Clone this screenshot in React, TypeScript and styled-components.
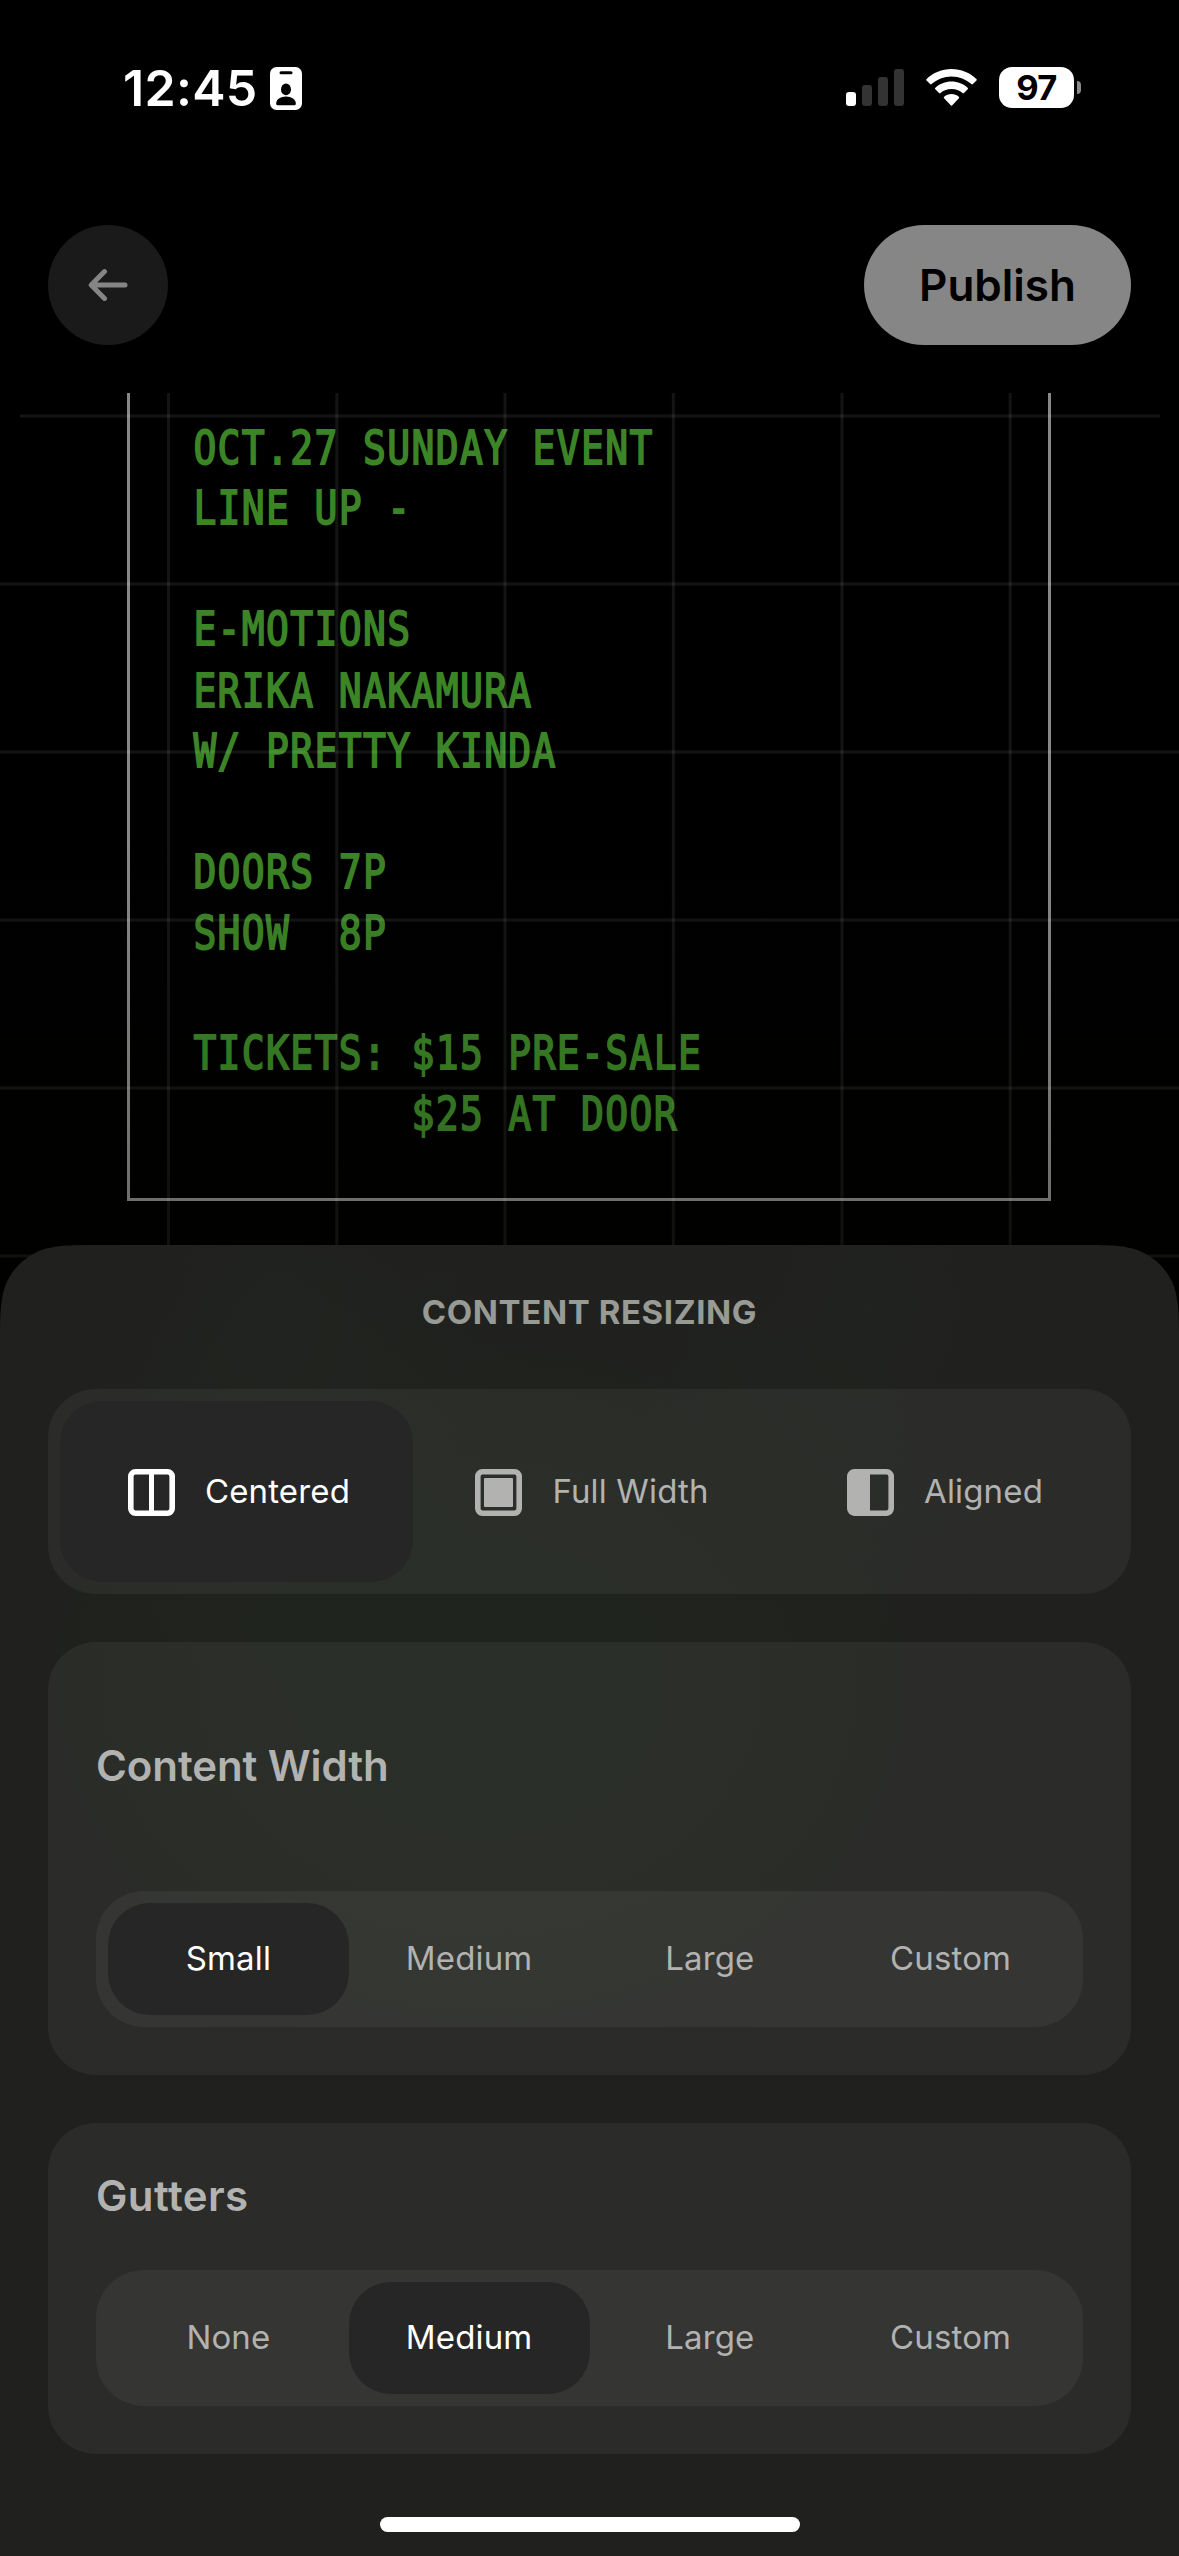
import React from "react";
import styled, { createGlobalStyle } from "styled-components";

const GlobalStyle = createGlobalStyle`
  * { box-sizing: border-box; }
  html, body { margin: 0; padding: 0; background: #000; }
  body { font-family: Inter, "Liberation Sans", sans-serif; }
  button { font: inherit; border: 0; padding: 0; background: none; }
`;

const Screen = styled.main`
  display: flex;
  flex-direction: column;
  width: 1179px;
  height: 2556px;
  overflow: hidden;
  background: #000;
`;

/* ---------- status bar ---------- */

const StatusBar = styled.div`
  display: flex;
  justify-content: space-between;
  align-items: center;
  height: 177px;
  padding: 0 98px 0 123px;
  color: #fff;
`;

const ClockGroup = styled.div`
  display: flex;
  align-items: center;
  gap: 13px;
`;

const Clock = styled.span`
  padding-bottom: 2px;
  font-size: 50px;
  font-weight: 600;
  line-height: 60px;
  letter-spacing: 0.3px;
`;

const StatusIcons = styled.div`
  display: flex;
  align-items: center;
  padding-bottom: 2px;
`;

const SignalBars = styled.div`
  display: flex;
  align-items: flex-end;
  gap: 6px;
  height: 37px;
  margin-right: 22px;
`;

const SignalBar = styled.span<{ $height: number; $active?: boolean }>`
  width: 10px;
  height: ${(p) => p.$height}px;
  border-radius: 3px;
  background: ${(p) => (p.$active ? "#fff" : "#333")};
`;

const Battery = styled.span`
  display: flex;
  align-items: center;
  justify-content: center;
  width: 75px;
  height: 41px;
  margin-left: 22px;
  border-radius: 13px;
  background: #fff;
  color: #000;
  font-size: 34.5px;
  font-weight: 700;
  line-height: 41px;
  letter-spacing: -0.6px;
`;

const BatteryTip = styled.span`
  width: 4px;
  height: 13px;
  margin-left: 3px;
  border-radius: 0 5px 5px 0;
  background: #8a8a8a;
`;

/* ---------- header ---------- */

const Header = styled.header`
  display: flex;
  justify-content: space-between;
  padding: 48px;
`;

const BackButton = styled.button`
  display: flex;
  align-items: center;
  justify-content: center;
  width: 120px;
  height: 120px;
  border-radius: 60px;
  background: #1a1a1a;
`;

const PublishButton = styled.button`
  width: 267px;
  height: 120px;
  border-radius: 60px;
  background: #868686;
  color: #000;
  font-size: 44px;
  font-weight: 600;
`;

/* ---------- page canvas ---------- */

const Canvas = styled.section`
  position: relative;
  flex: none;
  height: 967px;
  padding: 0 128px 0 127px;
`;

const GridLines = styled.svg`
  position: absolute;
  inset: 0;
`;

const CanvasShade = styled.div`
  position: absolute;
  inset: 0;
  background: linear-gradient(to bottom, rgba(4, 8, 0, 0) 440px, rgba(4, 8, 0, 0.22) 852px);
`;

const Poster = styled.article`
  height: 808px;
  padding: 25.6px 0 0 63.4px;
  border: 3px solid #888;
  border-top: 0;
`;

const PosterText = styled.pre`
  margin: 0;
  color: #3c8527;
  font-family: "DejaVu Sans Mono", monospace;
  font-size: 38px;
  line-height: 49.44px;
  letter-spacing: 1.35px;
  -webkit-text-stroke: 1.5px #3c8527;
  transform: scaleY(1.224);
  transform-origin: 0 0;
`;

/* ---------- sheet ---------- */

const Sheet = styled.section`
  position: relative;
  flex: none;
  display: flex;
  flex-direction: column;
  align-items: stretch;
  height: 1311px;
  margin-top: -115px;
  padding: 0 48px;
  background:
    radial-gradient(ellipse 580px 460px at 480px 440px, rgba(30, 46, 30, 0.28), rgba(30, 46, 30, 0.17) 50%, rgba(30, 46, 30, 0) 100%),
    radial-gradient(ellipse 240px 400px at 270px 60px, rgba(34, 42, 36, 0.22), rgba(34, 42, 36, 0) 100%),
    radial-gradient(ellipse 240px 320px at 870px 60px, rgba(34, 42, 36, 0.22), rgba(34, 42, 36, 0) 100%),
    #20201e;
  clip-path: path("M0 101C0 71.8 0 57.3 4.9 41.7C11.2 24.6 24.6 11.2 41.7 4.9C57.3 0 71.8 0 101 0L1078 0C1107.2 0 1121.7 0 1137.3 4.9C1154.4 11.2 1167.8 24.6 1174.1 41.7C1179 57.3 1179 71.8 1179 101L1179 1311L0 1311Z");
`;

const SheetTitle = styled.h1`
  margin: 0;
  height: 144px;
  padding-top: 47px;
  color: #989a94;
  font-size: 33px;
  font-weight: 700;
  line-height: 40px;
  letter-spacing: 0.6px;
  text-align: center;
`;

const Segmented = styled.div<{ $height: number }>`
  display: flex;
  flex: none;
  height: ${(p) => p.$height}px;
  padding: 12px;
  border-radius: 48px;
  background: rgba(255, 255, 255, 0.05);
`;

const Segment = styled.button<{ $selected?: boolean; $nudge?: number }>`
  display: flex;
  flex: 1 1 0;
  align-items: center;
  justify-content: center;
  gap: 27px;
  padding-left: ${(p) => p.$nudge ?? 0}px;
  border-radius: 42px;
  background: ${(p) => (p.$selected ? "#262626" : "transparent")};
  color: ${(p) => (p.$selected ? "#fff" : "#b2b2b1")};
`;

const SegmentLabel = styled.span`
  padding-bottom: 2px;
  font-size: 33px;
  font-weight: 400;
  line-height: 40px;
  letter-spacing: 0.15px;
`;

const Card = styled.div`
  display: flex;
  flex: none;
  flex-direction: column;
  margin-top: 48px;
  padding: 48px;
  border-radius: 48px;
  background: rgba(255, 255, 255, 0.05);
`;

const CardTitle = styled.h2<{ $height: number; $tracking: number }>`
  margin: 0 0 48px;
  height: ${(p) => p.$height}px;
  color: #b2b2b1;
  font-size: 42px;
  font-weight: 600;
  line-height: ${(p) => p.$height - 1}px;
  letter-spacing: ${(p) => p.$tracking}px;
`;

const HomeIndicator = styled.div`
  width: 420px;
  height: 15px;
  margin: 63px auto 0;
  border-radius: 8px;
  background: #fff;
`;

/* ---------- icons ---------- */

const BadgeIcon = () => (
  <svg width="32" height="43" viewBox="0 0 32 43">
    <rect width="32" height="43" rx="6.5" fill="#fff" />
    <rect x="9.5" y="4.2" width="13" height="3" rx="1.5" fill="#000" />
    <ellipse cx="16" cy="22.4" rx="5" ry="5.8" fill="#000" />
    <path d="M6.2 36.6C6.2 32.6 10.4 29.6 16 29.6S25.8 32.6 25.8 36.6C25.8 37.6 25.4 38.2 24.6 38.2H7.4C6.6 38.2 6.2 37.6 6.2 36.6Z" fill="#000" />
  </svg>
);

const WifiIcon = () => (
  <svg width="51" height="37" viewBox="0 0 51 37" fill="#fff">
    <path d="M25.5 0C35.1 0 43.9 3.8 50.4 10C50.9 10.5 50.9 11.1 50.5 11.5L46.9 15.1C46.5 15.5 45.9 15.5 45.4 15.1C40.1 10.3 33.1 7.4 25.5 7.4S10.9 10.3 5.6 15.1C5.1 15.5 4.5 15.5 4.1 15.1L.5 11.5C.1 11.1.1 10.5.6 10C7.1 3.8 15.9 0 25.5 0Z" />
    <path d="M25.5 12.6C31.7 12.6 37.3 14.9 41.6 18.8C42.1 19.2 42.1 19.9 41.7 20.3L38 24C37.6 24.4 37 24.4 36.5 24C33.6 21.4 29.7 19.9 25.5 19.9S17.4 21.4 14.5 24C14 24.4 13.4 24.4 13 24L9.3 20.3C8.9 19.9 8.9 19.2 9.4 18.8C13.7 14.9 19.3 12.6 25.5 12.6Z" />
    <path d="M25.5 25.1C28.3 25.1 30.9 26.1 32.8 27.7C33.3 28.1 33.3 28.8 32.9 29.2L26.3 36.3C25.9 36.8 25.1 36.8 24.7 36.3L18.1 29.2C17.7 28.8 17.7 28.1 18.2 27.7C20.1 26.1 22.7 25.1 25.5 25.1Z" />
  </svg>
);

const ArrowIcon = () => (
  <svg width="40" height="34" viewBox="0 0 40 34" fill="none" stroke="#858585" strokeWidth="5" strokeLinecap="round" strokeLinejoin="round">
    <path d="M16.5 3.6L3.2 17L16.5 30.4M3.8 17H37" />
  </svg>
);

const CenteredIcon = () => (
  <svg width="53" height="53" viewBox="0 -1 53 53" fill="none" stroke="currentColor" strokeWidth="5.6">
    <rect x="5.8" y="5.8" width="41.4" height="41.4" rx="4.6" />
    <path d="M26.5 5.8V47.2" strokeWidth="5" />
  </svg>
);

const FullWidthIcon = () => (
  <svg width="53" height="53" viewBox="0 -1 53 53" fill="none" stroke="currentColor" strokeWidth="5.6">
    <rect x="5.8" y="5.8" width="41.4" height="41.4" rx="4.6" />
    <rect x="12" y="12" width="29" height="29" rx="1" fill="currentColor" stroke="none" />
  </svg>
);

const AlignedIcon = () => (
  <svg width="53" height="53" viewBox="0 -1 53 53">
    <path
      fill="currentColor"
      fillRule="evenodd"
      d="M10.4 3H42.6A7.4 7.4 0 0 1 50 10.4V42.6A7.4 7.4 0 0 1 42.6 50H10.4A7.4 7.4 0 0 1 3 42.6V10.4A7.4 7.4 0 0 1 10.4 3ZM26 8.6V44.4H42.6A1.8 1.8 0 0 0 44.4 42.6V10.4A1.8 1.8 0 0 0 42.6 8.6Z"
    />
  </svg>
);

/* ---------- data ---------- */

const posterCopy = `OCT.27 SUNDAY EVENT
LINE UP -

E-MOTIONS
ERIKA NAKAMURA
W/ PRETTY KINDA

DOORS 7P
SHOW  8P

TICKETS: $15 PRE-SALE
         $25 AT DOOR`;

const columns = [168.5, 336.8, 505, 673.4, 842, 1010.2];
const rows = [191, 359, 527, 695, 863];

const layouts = [
  { label: "Centered", Icon: CenteredIcon },
  { label: "Full Width", Icon: FullWidthIcon },
  { label: "Aligned", Icon: AlignedIcon },
];

const OptionRow = ({ options, selected }: { options: string[]; selected: string }) => (
  <Segmented $height={136}>
    {options.map((o) => (
      <Segment key={o} $selected={o === selected}>
        <SegmentLabel>{o}</SegmentLabel>
      </Segment>
    ))}
  </Segmented>
);

export default function App() {
  return (
    <>
      <GlobalStyle />
      <Screen>
        <StatusBar>
          <ClockGroup>
            <Clock>12:45</Clock>
            <BadgeIcon />
          </ClockGroup>
          <StatusIcons>
            <SignalBars>
              <SignalBar $height={14} $active />
              <SignalBar $height={21} />
              <SignalBar $height={29} />
              <SignalBar $height={37} />
            </SignalBars>
            <WifiIcon />
            <Battery>97</Battery>
            <BatteryTip />
          </StatusIcons>
        </StatusBar>

        <Header>
          <BackButton aria-label="Back">
            <ArrowIcon />
          </BackButton>
          <PublishButton>Publish</PublishButton>
        </Header>

        <Canvas>
          <Poster>
            <PosterText>{posterCopy}</PosterText>
          </Poster>
          <GridLines width="1179" height="967" stroke="#fff" strokeOpacity="0.08" strokeWidth="3">
            <path d="M20 23H1160" />
            {rows.map((y) => (
              <path key={y} d={`M0 ${y}H1179`} />
            ))}
            {columns.map((x) => (
              <path key={x} d={`M${x} 0V967`} />
            ))}
          </GridLines>
          <CanvasShade />
        </Canvas>

        <Sheet>
          <SheetTitle>CONTENT RESIZING</SheetTitle>
          <Segmented $height={205}>
            {layouts.map(({ label, Icon }, i) => (
              <Segment key={label} $selected={i === 0} $nudge={2}>
                <Icon />
                <SegmentLabel>{label}</SegmentLabel>
              </Segment>
            ))}
          </Segmented>
          <Card>
            <CardTitle $height={153} $tracking={-0.1}>Content Width</CardTitle>
            <OptionRow options={["Small", "Medium", "Large", "Custom"]} selected="Small" />
          </Card>
          <Card>
            <CardTitle $height={51} $tracking={0.4}>Gutters</CardTitle>
            <OptionRow options={["None", "Medium", "Large", "Custom"]} selected="Medium" />
          </Card>
          <HomeIndicator />
        </Sheet>
      </Screen>
    </>
  );
}
